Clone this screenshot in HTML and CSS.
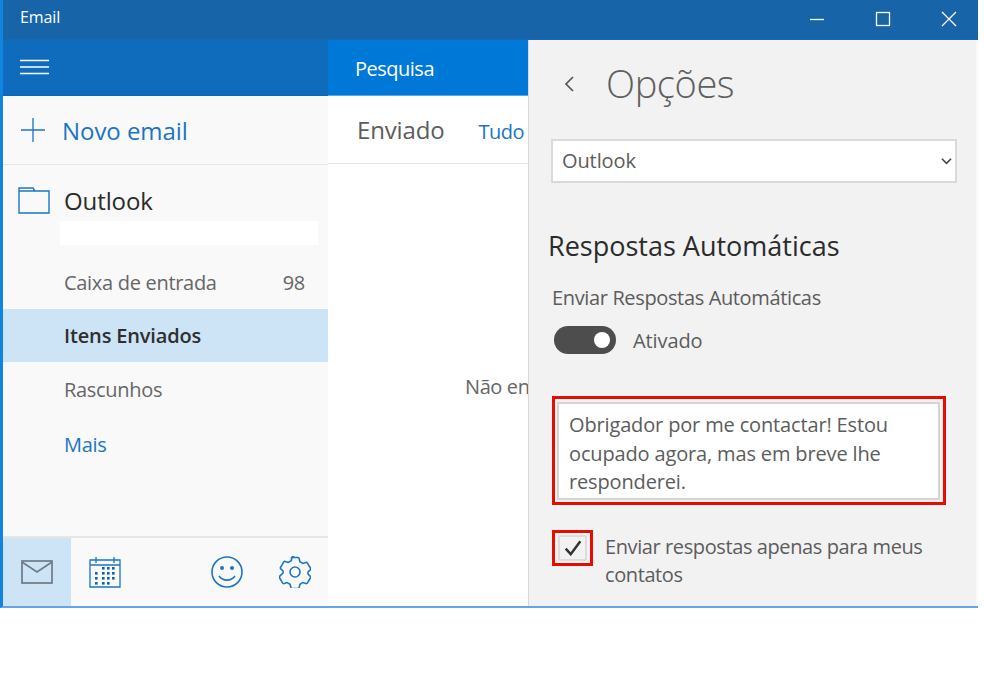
FILE: index.html
```html
<!DOCTYPE html>
<html lang="pt">
<head>
<meta charset="utf-8">
<title>Email</title>
<link rel="stylesheet" href="styles.css">
</head>
<body>
<div class="window">
  <header class="titlebar">
    <span class="app-title">Email</span>
    <div class="win-controls">
      <svg class="win-icon" viewBox="0 0 16 16"><path d="M1 8.5h14" /></svg>
      <svg class="win-icon" viewBox="0 0 16 16"><rect x="1.5" y="1.5" width="13" height="13" /></svg>
      <svg class="win-icon" viewBox="0 0 16 16"><path d="M1 1l14 14M15 1L1 15" /></svg>
    </div>
  </header>
  <div class="panes">
    <nav class="sidebar">
      <div class="hamburger-bar">
        <svg class="hamburger" viewBox="0 0 29 16"><path d="M0 1.5h29M0 8h29M0 14.5h29" /></svg>
      </div>
      <div class="new-mail">
        <svg class="plus" viewBox="0 0 24 24"><path d="M12 0v24M0 12h24" /></svg>
        <span>Novo email</span>
      </div>
      <div class="account">
        <svg class="folder" viewBox="0 0 32 27"><path d="M1 26V1h14l2 3h14v22zM1 4h16" /></svg>
        <span>Outlook</span>
      </div>
      <div class="account-mask"></div>
      <ul class="folders">
        <li class="folder-row inbox"><span>Caixa de entrada</span><span>98</span></li>
        <li class="folder-row selected"><span>Itens Enviados</span></li>
        <li class="folder-row drafts"><span>Rascunhos</span></li>
        <li class="folder-row more"><span>Mais</span></li>
      </ul>
      <div class="bottom-bar">
        <div class="tab active">
          <svg class="tab-icon mail" viewBox="0 0 32 24"><rect x="1" y="1" width="30" height="22" /><path d="M1 2l15 10L31 2" /></svg>
        </div>
        <div class="tab">
          <svg class="tab-icon" viewBox="0 0 32 32"><path d="M1 4h30v27H1zM1 9h30M7 1v6M25 1v6" /><g class="dots"><rect x="13" y="11" width="2.6" height="2.6"/><rect x="18" y="11" width="2.6" height="2.6"/><rect x="23" y="11" width="2.6" height="2.6"/><rect x="6" y="16" width="2.6" height="2.6"/><rect x="13" y="16" width="2.6" height="2.6"/><rect x="18" y="16" width="2.6" height="2.6"/><rect x="23" y="16" width="2.6" height="2.6"/><rect x="6" y="21" width="2.6" height="2.6"/><rect x="13" y="21" width="2.6" height="2.6"/><rect x="18" y="21" width="2.6" height="2.6"/><rect x="23" y="21" width="2.6" height="2.6"/><rect x="6" y="26" width="2.6" height="2.6"/><rect x="13" y="26" width="2.6" height="2.6"/><rect x="18" y="26" width="2.6" height="2.6"/></g></svg>
        </div>
        <div class="tab-spacer"></div>
        <div class="tab">
          <svg class="tab-icon smile" viewBox="0 0 32 32"><circle cx="16" cy="16" r="15" /><path d="M8 20c4 5.500 12 5.500 16 0" /><circle class="eye" cx="11" cy="12" r="2" /><circle class="eye" cx="21" cy="12" r="2" /></svg>
        </div>
        <div class="tab last">
          <svg class="tab-icon smile" viewBox="0 0 32 32"><circle cx="16" cy="16" r="5" /><path d="M13 1.500h6c.8 0 1 .5 1.200 1.200l.7 3 3 1.700 3-.9c.7-.2 1.200 0 1.600.6l3 5.200c.4.600.2 1.100-.3 1.600l-2.200 2.100v2l2.200 2.100c.5.500.7 1 .3 1.600l-3 5.200c-.4.600-.9.800-1.600.6l-3-.9-3 1.700-.7 3c-.2.700-.4 1.200-1.200 1.200h-6c-.8 0-1-.5-1.200-1.200l-.7-3-3-1.700-3 .9c-.7.200-1.200 0-1.600-.6l-3-5.200c-.4-.6-.2-1.100.3-1.600L4.100 17v-2l-2.200-2.100c-.5-.5-.7-1-.3-1.600l3-5.200c.4-.6.900-.8 1.600-.6l3 .9 3-1.700.7-3c.2-.7.400-1.200 1.200-1.200z" /></svg>
        </div>
      </div>
    </nav>
    <section class="list">
      <div class="search-bar">Pesquisa</div>
      <div class="list-head">
        <span class="list-title">Enviado</span>
        <span class="list-filter">Tudo</span>
      </div>
      <div class="list-empty">Não en</div>
    </section>
    <aside class="options">
      <div class="options-head">
        <svg class="back" viewBox="0 0 10 16"><path d="M9 1L2 8l7 7" /></svg>
        <h1>Opções</h1>
      </div>
      <div class="select"><span>Outlook</span>
        <svg class="caret" viewBox="0 0 12 8"><path d="M1 1.500l5 5 5-5" /></svg>
      </div>
      <h2>Respostas Automáticas</h2>
      <div class="field-label">Enviar Respostas Automáticas</div>
      <div class="toggle-row">
        <span class="toggle"><span class="knob"></span></span>
        <span>Ativado</span>
      </div>
      <div class="highlight message-box">
        <div class="textarea">Obrigador por me contactar! Estou<br>ocupado agora, mas em breve lhe<br>responderei.</div>
      </div>
      <div class="check-row">
        <div class="highlight check-box">
          <span class="check">
            <svg viewBox="0 0 16 14"><path d="M1.500 7.500l4.500 5L14.500 1" /></svg>
          </span>
        </div>
        <div class="check-label">Enviar respostas apenas para meus contatos</div>
      </div>
    </aside>
  </div>
</div>
</body>
</html>
```

FILE: styles.css
```css
* { box-sizing: border-box; }
html, body { margin: 0; padding: 0; background: #fff; }
body { font-family: "Open Sans", "Noto Sans", sans-serif; color: #5c5c5c; overflow: hidden; }
ul { list-style: none; margin: 0; padding: 0; }
h1, h2 { margin: 0; font-weight: 400; }
svg { display: block; fill: none; }

.window {
  width: 978px; height: 608px;
  border-left: 3px solid #1383e0;
  border-bottom: 2px solid #62a6ea;
  display: flex; flex-direction: column;
  overflow: hidden;
}
.titlebar {
  height: 40px; flex: none;
  background: #1764a8; color: #fff;
  display: flex; align-items: center; justify-content: space-between;
  padding: 0 21px 6px 17px;
  border-bottom: 1px solid #1468b4;
}
.app-title { font-size: 16px; letter-spacing: -0.1px; }
.win-controls { display: flex; gap: 50px; align-items: center; padding-top: 5px; }
.win-icon { width: 16px; height: 16px; stroke: #fff; stroke-width: 1.300; }

.panes { flex: 1; display: flex; min-height: 0; }

.sidebar {
  width: 325px; flex: none;
  background: #f9f9f9;
  display: flex; flex-direction: column;
}
.hamburger-bar {
  height: 56px; flex: none;
  background: #0f6cbd;
  display: flex; align-items: center;
  padding: 0 0 1px 17px;
  border-bottom: 1px solid #0a68b8;
}
.hamburger { width: 29px; height: 16px; stroke: #fff; stroke-width: 1.300; }
.new-mail {
  height: 69px; flex: none;
  display: flex; align-items: center; gap: 17px;
  padding: 0 0 0 18px;
  color: #1b75c4; font-size: 24px; letter-spacing: -0.05px;
  border-bottom: 1px solid #e6e6e6;
}
.plus { width: 24px; height: 24px; stroke: #1b75c4; stroke-width: 1.300; }
.account {
  display: flex; align-items: flex-start; gap: 14px;
  padding: 21px 0 0 15px; height: 56px; flex: none;
  color: #2b2b2b; font-size: 24px; letter-spacing: -0.1px;
}
.account span { margin-top: -2px; }
.folder { width: 32px; height: 27px; stroke: #1b75c4; stroke-width: 1.400; margin-top: 1px; }
.account-mask { height: 24px; flex: none; margin: 0 10px 0 57px; background: #fff; }

.folders { flex: none; padding-top: 11px; height: 291px; }
.folder-row {
  display: flex; align-items: center; justify-content: space-between;
  padding: 0 23px 0 61px;
  font-size: 20px; letter-spacing: -0.3px; color: #666;
}
.inbox { height: 53px; }
.selected { height: 53px; background: #cce4f6; font-weight: 600; color: #2f2f2f; letter-spacing: -0.15px; }
.drafts { height: 54px; }
.more { height: 56px; color: #1b75c4; }

.bottom-bar {
  flex: 1; display: flex; min-height: 0;
  border-top: 2px solid #e6e6e6;
}
.tab { width: 68px; display: flex; align-items: center; justify-content: center; }
.tab.last { width: 67px; }
.tab.active { background: #cce4f6; }
.tab-spacer { flex: 1; }
.tab-icon { width: 32px; height: 32px; stroke: #1b75c4; stroke-width: 1.300; }
.tab-icon.smile { stroke-width: 1.600; }
.tab-icon.mail { height: 24px; stroke: #6f7b85; stroke-width: 1.700; }
.dots rect { fill: #0f62b0; stroke: none; }
.eye { fill: #1b75c4; stroke: none; }

.list {
  width: 201px; flex: none;
  background: #fff; overflow: hidden;
  border-right: 1px solid #d9d9d9;
  display: flex; flex-direction: column;
}
.search-bar {
  height: 56px; flex: none;
  background: #0078d7; color: #fff;
  padding: 2px 0 0 27px;
  display: flex; align-items: center;
  font-size: 20px; letter-spacing: -0.5px;
  border-bottom: 1px solid #5aa5e6;
}
.list-head {
  height: 68px; flex: none;
  display: flex; align-items: baseline;
  padding: 17px 0 0 29px;
  border-bottom: 1px solid #e6e6e6;
  white-space: nowrap;
}
.list-title { font-size: 24px; letter-spacing: -0.15px; color: #5c5c5c; }
.list-filter { font-size: 20px; letter-spacing: -0.5px; color: #1b75c4; margin-left: 34px; }
.list-empty {
  font-size: 20px; letter-spacing: -0.4px; color: #666;
  white-space: nowrap;
  padding: 209px 0 0 137px;
}

.options {
  flex: 1; min-width: 0;
  background: #f2f2f2;
  padding: 0 0 0 20px;
  color: #5c5c5c;
  border-right: 2px solid #fafafa;
}
.options-head { height: 80px; display: flex; align-items: center; padding: 5px 0 0 15px; gap: 32px; }
.back { width: 10px; height: 16px; stroke: #555; stroke-width: 1.700; margin-top: 3px; }
h1 { font-size: 38px; letter-spacing: -0.4px; color: #5f5f5f; font-weight: 300; }
.select {
  width: 406px; height: 44px;
  margin: 19px 0 0 2px;
  background: #fff; border: 2px solid #dadada;
  display: flex; align-items: center; justify-content: space-between;
  padding: 0 3px 2px 9px;
  font-size: 20px; letter-spacing: -0.1px;
}
.caret { width: 11px; height: 8px; stroke: #444; stroke-width: 1.700; margin-top: 2px; }
h2 { font-size: 27px; letter-spacing: 0; color: #2b2b2b; margin: 43px 0 0 -1px; line-height: 40px; }
.field-label { font-size: 20px; letter-spacing: -0.36px; margin: 19px 0 0 3px; line-height: 26px; }
.toggle-row { display: flex; align-items: center; gap: 17px; margin: 15px 0 0 5px; font-size: 20px; letter-spacing: -0.1px; }
.toggle {
  width: 62px; height: 28px; border-radius: 14px;
  background: #4d4d4d;
  display: flex; align-items: center; justify-content: flex-end;
  padding-right: 6px;
}
.knob { width: 16px; height: 16px; border-radius: 50%; background: #fff; }

.highlight { border: 3px solid #e60c00; }
.message-box {
  width: 394px; height: 109px;
  margin: 42px 0 0 3px;
  padding: 3px 3px 2px 2px;
}
.textarea {
  height: 100%;
  background: #fff; border: 2px solid #d5d5d5;
  padding: 7px 0 0 10px;
  font-size: 20px; line-height: 28.500px; letter-spacing: -0.15px;
  white-space: nowrap;
}
.check-row { display: flex; gap: 12px; margin: 25px 0 0 3px; }
.check-box { width: 41px; height: 36px; flex: none; padding: 2px 3px; }
.check {
  display: flex; align-items: center; justify-content: center;
  width: 100%; height: 100%;
  border: 2px solid #dcdcdc; background: #f2f2f2;
}
.check svg { width: 18px; height: 16px; stroke: #333; stroke-width: 2.200; flex: none; }
.check-label { width: 340px; font-size: 20px; line-height: 28px; letter-spacing: -0.4px; margin-top: 3px; }
```
